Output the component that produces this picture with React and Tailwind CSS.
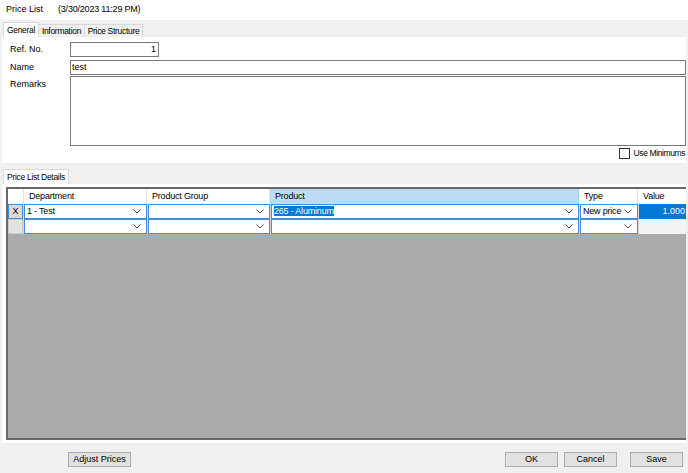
import React from 'react';

const Chevron = () => (
    <svg width="8" height="5" viewBox="0 0 8 5" className="shrink-0">
        <path d="M0.5 0.5 L4 4 L7.5 0.5" fill="none" stroke="#555" strokeWidth="1" />
    </svg>
);

const ComboCell = ({ width, text, selected }) => (
    <div className="h-full flex items-center border border-[#3f8ee0] bg-white pl-[2px] pr-[5px] shrink-0" style={{ width }}>
        <span className="flex-1 overflow-hidden tracking-[-0.2px]">
            {selected ? <span className="bg-[#0078d7] text-white">{text}</span> : text}
        </span>
        <Chevron />
    </div>
);

const Btn = ({ children, className }) => (
    <button className={`h-[15px] bg-[#e1e1e1] border border-[#adadad] flex items-center justify-center text-black shrink-0 ${className}`}>
        {children}
    </button>
);

const App = () => {
    return (
        <div className="w-[688px] h-[473px] bg-[#f0f0f0] text-[9px] text-black flex flex-col overflow-hidden whitespace-nowrap" style={{ fontFamily: '"Liberation Sans", Arial, sans-serif' }}>
            {/* title */}
            <div className="h-[20px] bg-white flex items-center pl-[6px] shrink-0">
                <span className="w-[52px]">Price List</span>
                <span className="tracking-[-0.2px]">(3/30/2023 11:29 PM)</span>
            </div>

            {/* tabs */}
            <div className="h-[17px] flex items-end pl-[3px] shrink-0 text-[8.5px] tracking-[-0.3px]">
                <div className="h-[15px] w-[36px] shrink-0 bg-white border border-b-0 border-[#d9d9d9] flex items-center justify-center">General</div>
                <div className="h-[13px] w-[46px] shrink-0 bg-[#f0f0f0] border border-l-0 border-b-0 border-[#d9d9d9] flex items-center justify-center">Information</div>
                <div className="h-[13px] w-[58px] shrink-0 bg-[#f0f0f0] border border-l-0 border-b-0 border-[#d9d9d9] flex items-center justify-center">Price Structure</div>
            </div>

            {/* general panel */}
            <div className="ml-[2px] w-[684px] h-[126px] bg-white flex flex-col pt-[5px] shrink-0">
                <div className="flex items-center h-[15px]">
                    <span className="w-[68px] pl-[8px]">Ref. No.</span>
                    <div className="w-[89px] h-full border border-[#7a7a7a] flex items-center justify-end pr-[2px]">1</div>
                </div>
                <div className="flex items-center h-[15px] mt-[3px]">
                    <span className="w-[68px] pl-[8px]">Name</span>
                    <div className="flex-1 h-full border border-[#7a7a7a] flex items-center pl-[1px]">test</div>
                </div>
                <div className="flex h-[70px] mt-[1px]">
                    <span className="w-[68px] pl-[8px] pt-[2px]">Remarks</span>
                    <div className="flex-1 h-full border border-[#7a7a7a]"></div>
                </div>
                <div className="flex items-center justify-end h-[12px] mt-[1px] pr-[1px]">
                    <div className="w-[11px] h-[11px] border border-[#333] bg-white mr-[4px]"></div>
                    <span className="text-[8.5px] tracking-[-0.4px]">Use Minimums</span>
                </div>
            </div>

            {/* details tab */}
            <div className="h-[21px] flex items-end pl-[3px] shrink-0">
                <div className="h-[15px] w-[66px] shrink-0 bg-white border border-b-0 border-[#d9d9d9] flex items-center justify-center text-[8.5px] tracking-[-0.3px]">Price List Details</div>
            </div>

            {/* details panel */}
            <div className="ml-[2px] w-[684px] h-[259px] bg-white pt-[3px] pl-[4px] pb-[3px] shrink-0">
                <div className="w-full h-full border-2 border-r-0 border-[#696969] bg-[#ababab] flex flex-col">
                    {/* header */}
                    <div className="h-[15px] bg-white flex shrink-0 tracking-[-0.2px]">
                        <div className="w-[16px] shrink-0 border-r border-[#e5e5e5]"></div>
                        <div className="w-[123px] shrink-0 border-r border-[#e5e5e5] flex items-center pl-[5px]">Department</div>
                        <div className="w-[123px] shrink-0 border-r border-[#e5e5e5] flex items-center pl-[5px]">Product Group</div>
                        <div className="w-[309px] shrink-0 bg-[#bcdcf4] border-r border-[#99c9ef] flex items-center pl-[5px]">Product</div>
                        <div className="w-[59px] shrink-0 border-r border-[#e5e5e5] flex items-center pl-[5px]">Type</div>
                        <div className="flex-1 flex items-center pl-[5px]">Value</div>
                    </div>
                    {/* row 1 */}
                    <div className="h-[15px] flex shrink-0 gap-[1px] bg-[#d6d6d6]">
                        <div className="w-[15px] shrink-0 h-full bg-[#d9d9d9] border border-[#3f8ee0] flex items-center justify-center">X</div>
                        <ComboCell width={123} text="1 - Test" />
                        <ComboCell width={122} text="" />
                        <ComboCell width={308} text="265 - Aluminum" selected />
                        <ComboCell width={58} text="New price" />
                        <div className="flex-1 h-full bg-[#0078d7] text-white flex items-center justify-end pr-[1px]">1.000</div>
                    </div>
                    {/* row 2 */}
                    <div className="h-[15px] flex shrink-0 gap-[1px] bg-[#d6d6d6]">
                        <div className="w-[15px] shrink-0 h-full bg-[#e3e3e3] border border-[#c9c9c9]"></div>
                        <ComboCell width={123} text="" />
                        <ComboCell width={122} text="" />
                        <ComboCell width={308} text="" />
                        <ComboCell width={58} text="" />
                        <div className="flex-1 h-full bg-[#f4f4f4]"></div>
                    </div>
                </div>
            </div>

            {/* buttons */}
            <div className="flex items-center h-[30px] pt-[3px] shrink-0">
                <Btn className="ml-[68px] w-[63px]">Adjust Prices</Btn>
                <div className="flex-1"></div>
                <Btn className="w-[53px]">OK</Btn>
                <Btn className="w-[53px] ml-[6px]">Cancel</Btn>
                <Btn className="w-[53px] ml-[13px] mr-[5px]">Save</Btn>
            </div>
        </div>
    );
};

export default App;
